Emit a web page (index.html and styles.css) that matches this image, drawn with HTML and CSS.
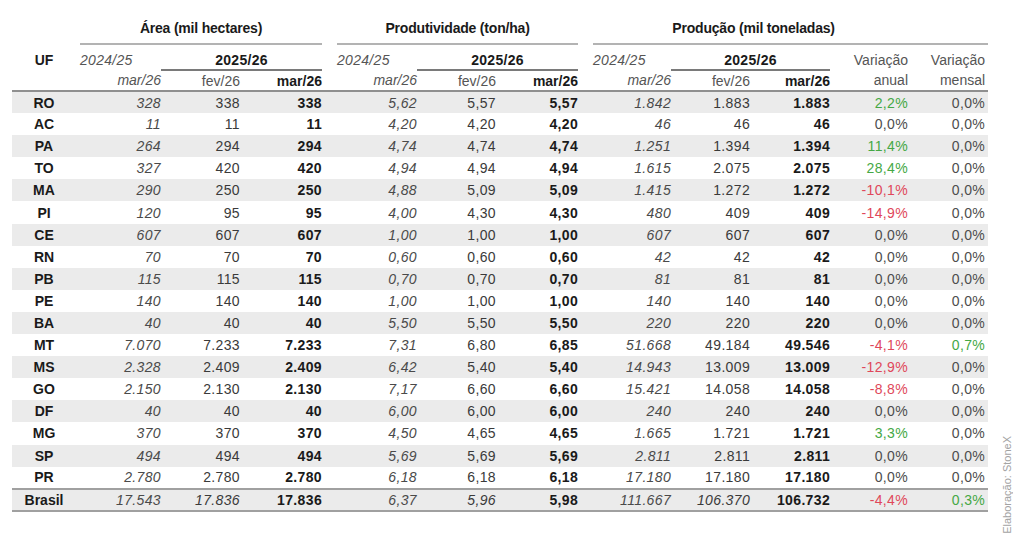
FILE: index.html
```html
<!DOCTYPE html>
<html lang="pt-BR">
<head>
<meta charset="utf-8">
<title>Oferta e demanda por UF</title>
<link rel="stylesheet" href="styles.css">
</head>
<body>
<div class="page">
<table class="grid">
<colgroup>
<col class="c-uf"><col class="c-a1"><col class="c-a2"><col class="c-a3"><col class="c-gap">
<col class="c-p1"><col class="c-p2"><col class="c-p3"><col class="c-gap">
<col class="c-q1"><col class="c-q2"><col class="c-q3"><col class="c-va"><col class="c-vm">
</colgroup>
<thead>
<tr class="h-title">
<th></th>
<th colspan="3" class="group">Área (mil hectares)</th>
<th></th>
<th colspan="3" class="group">Produtividade (ton/ha)</th>
<th></th>
<th colspan="5" class="group group-prod">Produção (mil toneladas)</th>
</tr>
<tr class="h-year">
<th class="uf">UF</th>
<th class="prev">2024/25</th><th colspan="2" class="cur">2025/26</th>
<th></th>
<th class="prev">2024/25</th><th colspan="2" class="cur">2025/26</th>
<th></th>
<th class="prev">2024/25</th><th colspan="2" class="cur">2025/26</th>
<th class="lbl">Variação</th><th class="lbl last">Variação</th>
</tr>
<tr class="h-month">
<th></th>
<th class="it">mar/26</th><th class="mid">fev/26</th><th class="bd">mar/26</th>
<th></th>
<th class="it">mar/26</th><th class="mid">fev/26</th><th class="bd">mar/26</th>
<th></th>
<th class="it">mar/26</th><th class="mid">fev/26</th><th class="bd">mar/26</th>
<th class="lbl">anual</th><th class="lbl last">mensal</th>
</tr>
</thead>
<tbody>
<tr><td>RO</td><td>328</td><td>338</td><td>338</td><td></td><td>5,62</td><td>5,57</td><td>5,57</td><td></td><td>1.842</td><td>1.883</td><td>1.883</td><td class="up">2,2%</td><td>0,0%</td></tr>
<tr><td>AC</td><td>11</td><td>11</td><td>11</td><td></td><td>4,20</td><td>4,20</td><td>4,20</td><td></td><td>46</td><td>46</td><td>46</td><td>0,0%</td><td>0,0%</td></tr>
<tr><td>PA</td><td>264</td><td>294</td><td>294</td><td></td><td>4,74</td><td>4,74</td><td>4,74</td><td></td><td>1.251</td><td>1.394</td><td>1.394</td><td class="up">11,4%</td><td>0,0%</td></tr>
<tr><td>TO</td><td>327</td><td>420</td><td>420</td><td></td><td>4,94</td><td>4,94</td><td>4,94</td><td></td><td>1.615</td><td>2.075</td><td>2.075</td><td class="up">28,4%</td><td>0,0%</td></tr>
<tr><td>MA</td><td>290</td><td>250</td><td>250</td><td></td><td>4,88</td><td>5,09</td><td>5,09</td><td></td><td>1.415</td><td>1.272</td><td>1.272</td><td class="down">-10,1%</td><td>0,0%</td></tr>
<tr><td>PI</td><td>120</td><td>95</td><td>95</td><td></td><td>4,00</td><td>4,30</td><td>4,30</td><td></td><td>480</td><td>409</td><td>409</td><td class="down">-14,9%</td><td>0,0%</td></tr>
<tr><td>CE</td><td>607</td><td>607</td><td>607</td><td></td><td>1,00</td><td>1,00</td><td>1,00</td><td></td><td>607</td><td>607</td><td>607</td><td>0,0%</td><td>0,0%</td></tr>
<tr><td>RN</td><td>70</td><td>70</td><td>70</td><td></td><td>0,60</td><td>0,60</td><td>0,60</td><td></td><td>42</td><td>42</td><td>42</td><td>0,0%</td><td>0,0%</td></tr>
<tr><td>PB</td><td>115</td><td>115</td><td>115</td><td></td><td>0,70</td><td>0,70</td><td>0,70</td><td></td><td>81</td><td>81</td><td>81</td><td>0,0%</td><td>0,0%</td></tr>
<tr><td>PE</td><td>140</td><td>140</td><td>140</td><td></td><td>1,00</td><td>1,00</td><td>1,00</td><td></td><td>140</td><td>140</td><td>140</td><td>0,0%</td><td>0,0%</td></tr>
<tr><td>BA</td><td>40</td><td>40</td><td>40</td><td></td><td>5,50</td><td>5,50</td><td>5,50</td><td></td><td>220</td><td>220</td><td>220</td><td>0,0%</td><td>0,0%</td></tr>
<tr><td>MT</td><td>7.070</td><td>7.233</td><td>7.233</td><td></td><td>7,31</td><td>6,80</td><td>6,85</td><td></td><td>51.668</td><td>49.184</td><td>49.546</td><td class="down">-4,1%</td><td class="up">0,7%</td></tr>
<tr><td>MS</td><td>2.328</td><td>2.409</td><td>2.409</td><td></td><td>6,42</td><td>5,40</td><td>5,40</td><td></td><td>14.943</td><td>13.009</td><td>13.009</td><td class="down">-12,9%</td><td>0,0%</td></tr>
<tr><td>GO</td><td>2.150</td><td>2.130</td><td>2.130</td><td></td><td>7,17</td><td>6,60</td><td>6,60</td><td></td><td>15.421</td><td>14.058</td><td>14.058</td><td class="down">-8,8%</td><td>0,0%</td></tr>
<tr><td>DF</td><td>40</td><td>40</td><td>40</td><td></td><td>6,00</td><td>6,00</td><td>6,00</td><td></td><td>240</td><td>240</td><td>240</td><td>0,0%</td><td>0,0%</td></tr>
<tr><td>MG</td><td>370</td><td>370</td><td>370</td><td></td><td>4,50</td><td>4,65</td><td>4,65</td><td></td><td>1.665</td><td>1.721</td><td>1.721</td><td class="up">3,3%</td><td>0,0%</td></tr>
<tr><td>SP</td><td>494</td><td>494</td><td>494</td><td></td><td>5,69</td><td>5,69</td><td>5,69</td><td></td><td>2.811</td><td>2.811</td><td>2.811</td><td>0,0%</td><td>0,0%</td></tr>
<tr><td>PR</td><td>2.780</td><td>2.780</td><td>2.780</td><td></td><td>6,18</td><td>6,18</td><td>6,18</td><td></td><td>17.180</td><td>17.180</td><td>17.180</td><td>0,0%</td><td>0,0%</td></tr>
</tbody>
<tfoot>
<tr class="total"><td>Brasil</td><td>17.543</td><td>17.836</td><td>17.836</td><td></td><td>6,37</td><td>5,96</td><td>5,98</td><td></td><td>111.667</td><td>106.370</td><td>106.732</td><td class="down">-4,4%</td><td class="up">0,3%</td></tr>
</tfoot>
</table>
<div class="credit">Elaboração: StoneX</div>
</div>
</body>
</html>
```
FILE: styles.css
```css
html, body {
  margin: 0;
  padding: 0;
  background: #ffffff;
}

body {
  font-family: "Liberation Sans", Arial, sans-serif;
  color: #1c1c1c;
}

.page {
  display: flex;
  height: 538px;
  padding-left: 12px;
  box-sizing: border-box;
  overflow: hidden;
}

.grid {
  border-collapse: collapse;
  table-layout: fixed;
  width: 976px;
  margin-top: 7px;
  align-self: flex-start;
  font-size: 14px;
  line-height: 16px;
}

.c-uf { width: 68px; }
.c-a1 { width: 81px; }
.c-a2 { width: 79px; }
.c-a3 { width: 82px; }
.c-gap { width: 15px; }
.c-p1 { width: 80px; }
.c-p2 { width: 79px; }
.c-p3 { width: 82px; }
.c-q1 { width: 78px; }
.c-q2 { width: 79px; }
.c-q3 { width: 80px; }
.c-va { width: 78px; }
.c-vm { width: 80px; }

th, td {
  padding: 0;
  text-align: right;
  white-space: nowrap;
}

td {
  letter-spacing: 0.35px;
}

/* header: group titles */
.h-title th {
  height: 29px;
  vertical-align: bottom;
  padding-bottom: 7px;
}
.h-title .group {
  text-align: center;
  font-weight: 700;
  letter-spacing: -0.2px;
  color: #1a1a1a;
  border-bottom: 2px solid #b3b3b3;
}
.h-title .group-prod {
  padding-right: 74px;
}

/* header: years */
.h-year th {
  height: 19px;
  font-weight: 400;
  padding-top: 5px;
}
.h-year .uf {
  text-align: center;
  font-weight: 700;
  padding-right: 4px;
  color: #1a1a1a;
}
.h-year .prev {
  text-align: left;
  font-style: italic;
  color: #555555;
  letter-spacing: 0.3px;
}
.h-year .cur {
  text-align: center;
  font-weight: 700;
  color: #1a1a1a;
  letter-spacing: 0.3px;
  border-bottom: 2px solid #7a7a7a;
}
.lbl {
  color: #555555;
  font-weight: 400;
}
.last {
  padding-right: 3px;
}

/* header: months */
.h-month th {
  height: 19px;
  font-weight: 400;
  color: #555555;
  border-bottom: 2px solid #8f8f8f;
}
.h-month .it {
  font-style: italic;
}
.h-month .bd {
  font-weight: 700;
  color: #1a1a1a;
}

/* body rows */
tbody tr, tfoot tr {
  height: 22.1px;
}
tbody tr:nth-child(odd) {
  background: #ebebeb;
}
td:first-child {
  text-align: center;
  font-weight: 700;
  padding-right: 4px;
  letter-spacing: 0;
  color: #1a1a1a;
}
td:nth-child(2), td:nth-child(6), td:nth-child(10) {
  font-style: italic;
  color: #4a4a4a;
}
td:nth-child(3), td:nth-child(7), td:nth-child(11) {
  color: #3a3a3a;
}
td:nth-child(4), td:nth-child(8), td:nth-child(12) {
  font-weight: 700;
  color: #1a1a1a;
}
td:nth-child(13), td:nth-child(14) {
  color: #4d4d4d;
}
td:nth-child(14) {
  padding-right: 3px;
}
td.up {
  color: #45a845;
}
td.down {
  color: #e0475a;
}

/* total row */
.total {
  background: #ebebeb;
}
.total td {
  border-top: 2px solid #a0a0a0;
  border-bottom: 2px solid #a0a0a0;
}
.total td:nth-child(3), .total td:nth-child(7), .total td:nth-child(11) {
  font-style: italic;
}

/* vertical credit */
.credit {
  align-self: flex-end;
  writing-mode: vertical-rl;
  transform: rotate(180deg);
  font-size: 11px;
  color: #a3a3a3;
  margin: 0 0 4px 13px;
  white-space: nowrap;
}
```
